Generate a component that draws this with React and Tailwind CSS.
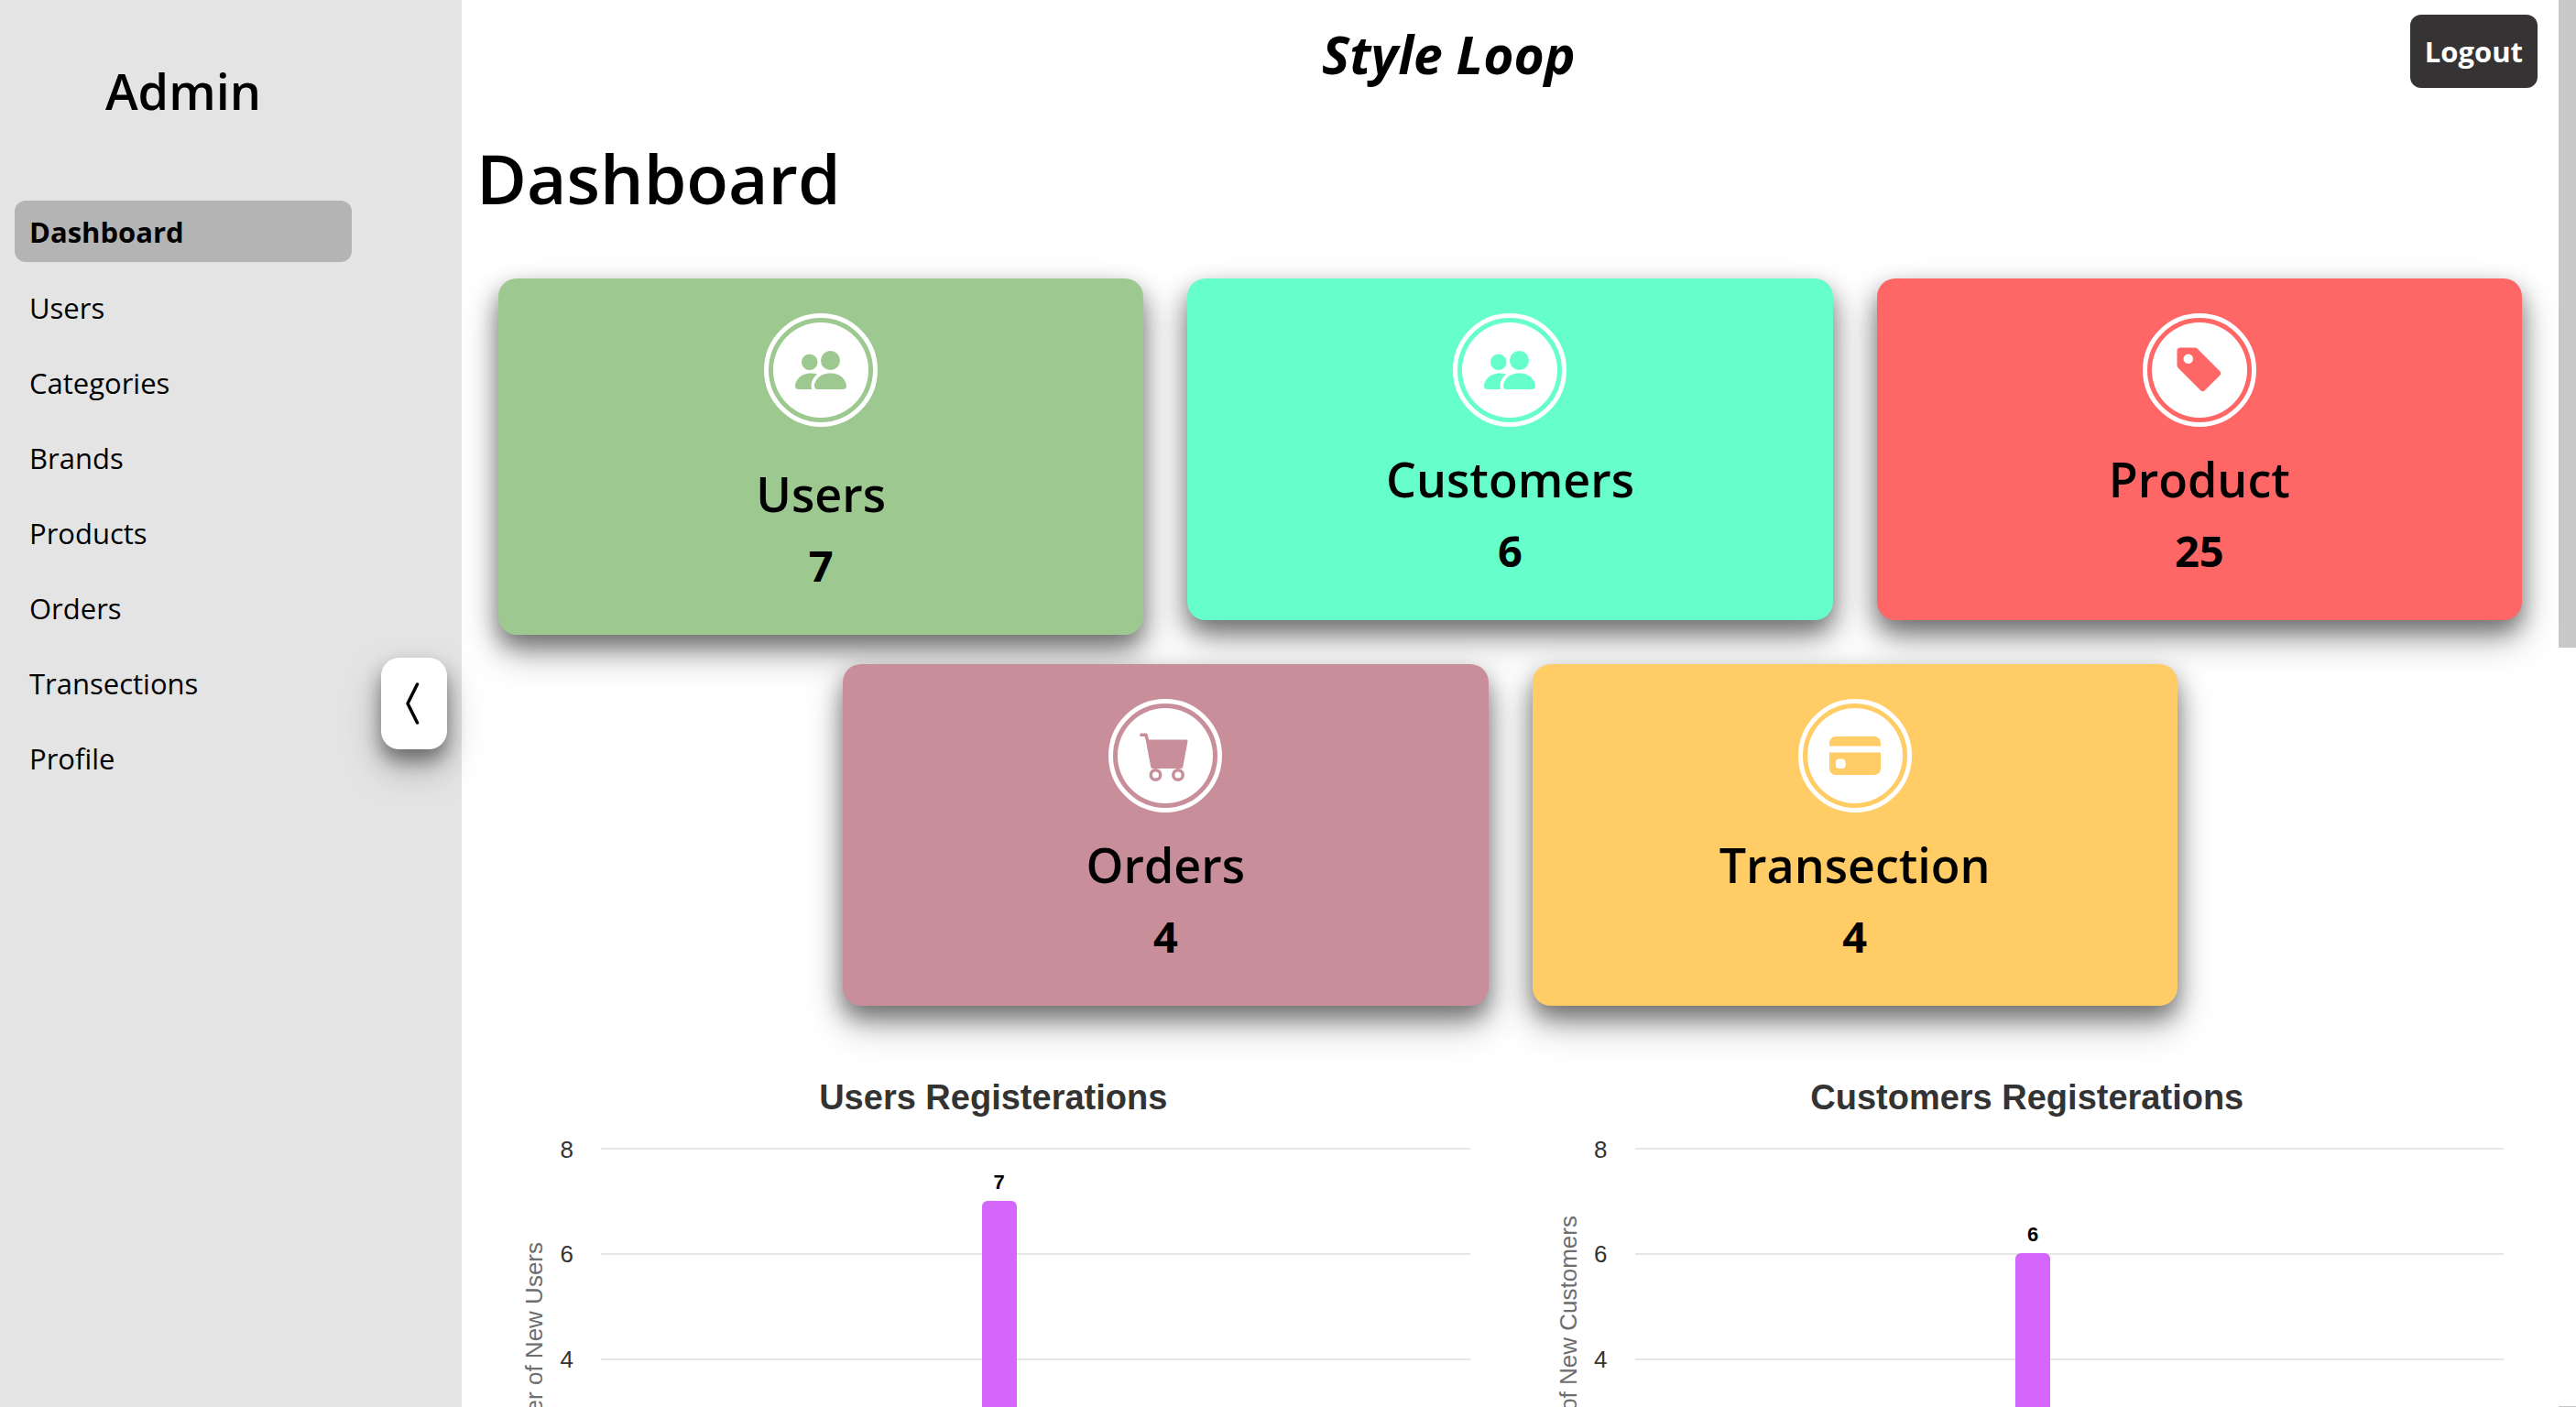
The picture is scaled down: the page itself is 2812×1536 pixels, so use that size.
import { BsPeopleFill, BsTagFill, BsCartFill, BsCreditCardFill, BsChevronCompactLeft } from "react-icons/bs";

const navItems = ["Dashboard", "Users", "Categories", "Brands", "Products", "Orders", "Transections", "Profile"];

const stats = [
  { label: "Users", value: 7, Icon: BsPeopleFill, bg: "bg-[#9dc991]", text: "text-[#9dc991]", gap: "mt-9" },
  { label: "Customers", value: 6, Icon: BsPeopleFill, bg: "bg-[#66ffcc]", text: "text-[#66ffcc]", gap: "mt-5" },
  { label: "Product", value: 25, Icon: BsTagFill, bg: "bg-[#ff6666]", text: "text-[#ff6666]", gap: "mt-5" },
  { label: "Orders", value: 4, Icon: BsCartFill, bg: "bg-[#c88f9b]", text: "text-[#c88f9b]", gap: "mt-5" },
  { label: "Transection", value: 4, Icon: BsCreditCardFill, bg: "bg-[#ffcc66]", text: "text-[#ffcc66]", gap: "mt-5" },
];

const ticks = [8, 6, 4, 2, 0];

const charts = [
  { title: "Users Registerations", axis: "Number of New Users", months: [0, 0, 0, 0, 0, 7, 0, 0, 0, 0, 0, 0] },
  { title: "Customers Registerations", axis: "Number of New Customers", months: [0, 0, 0, 0, 0, 6, 0, 0, 0, 0, 0, 0] },
];

function Sidebar() {
  return (
    <aside className="flex w-[504px] shrink-0 items-center justify-between bg-[#e4e4e4] px-4">
      <div className="w-[368px] self-start pt-[55px]">
        <p className="text-center text-[54px] leading-[88px] font-semibold">Admin</p>
        <nav className="mt-[76px] flex flex-col gap-[15px]">
          {navItems.map((item, i) => (
            <a
              key={item}
              href="#"
              className={
                i === 0
                  ? "rounded-xl bg-[#b4b4b4] px-4 pt-0.5 text-[31px] leading-[65px] font-bold"
                  : "rounded-xl px-4 pt-[3px] text-[31px] leading-[64px]"
              }
            >
              {item}
            </a>
          ))}
        </nav>
      </div>
      <button
        type="button"
        aria-label="Collapse sidebar"
        className="rounded-[20px] bg-white px-2 py-[22px] shadow-[0_20px_40px_rgba(0,0,0,0.25),0_12px_20px_rgba(0,0,0,0.4)]"
      >
        <BsChevronCompactLeft className="size-14" />
      </button>
    </aside>
  );
}

function StatCard({ label, value, Icon, bg, text, gap }) {
  return (
    <section
      className={`flex w-[calc((100%-96px)/3)] flex-col items-center rounded-[20px] pt-[38px] pb-10 shadow-[0_20px_40px_rgba(0,0,0,0.3),0_12px_24px_rgba(0,0,0,0.4)] ${bg}`}
    >
      <div className="rounded-full border-[5px] border-white p-[5px]">
        <div className="rounded-full bg-white p-6">
          <Icon className={`size-14 ${text}`} />
        </div>
      </div>
      <h2 className={`text-[52px] leading-[74px] font-semibold ${gap}`}>{label}</h2>
      <p className="mt-1.5 text-[47px] leading-[71px] font-bold">{value}</p>
    </section>
  );
}

function BarChart({ title, axis, months }) {
  return (
    <figure className="min-w-0 flex-1 pr-11 font-['Liberation_Sans',sans-serif]">
      <figcaption className="pl-11 text-center text-[38px] leading-[44px] font-bold text-[#333333]">{title}</figcaption>
      <div className="mt-[33px] flex h-[461px]">
        <div className="flex w-[75px] items-center justify-end">
          <span className="rotate-180 text-[26px] leading-6 whitespace-nowrap text-[#6e6e6e] [writing-mode:vertical-rl]">
            {axis}
          </span>
        </div>
        <div className="flex w-[61px] flex-col justify-between pt-0.5 pr-[30px] text-right text-[26px] text-[#333333]">
          {ticks.map((t) => (
            <span key={t} className="flex h-0 items-center justify-end">
              {t}
            </span>
          ))}
        </div>
        <div className="relative flex-1">
          <div className="absolute inset-0 flex flex-col justify-between">
            {ticks.map((t) => (
              <div key={t} className="h-0.5 bg-[#e6e6e6]" />
            ))}
          </div>
          <div className="relative grid h-full grid-cols-12 items-end">
            {months.map((v, i) => (
              <div key={i} className="flex h-full flex-col items-center justify-end">
                {v > 0 && (
                  <>
                    <span className="mb-1.5 text-[22px] leading-7 font-bold">{v}</span>
                    <div className="w-[38px] rounded-t-md bg-[#d466fc]" style={{ height: `${(v / 8) * 100}%` }} />
                  </>
                )}
              </div>
            ))}
          </div>
        </div>
      </div>
    </figure>
  );
}

export default function App() {
  return (
    <div className="flex h-screen overflow-hidden bg-white font-['Open_Sans','Noto_Sans',sans-serif] text-black">
      <Sidebar />
      <main className="min-w-0 flex-1 overflow-x-hidden overflow-y-auto px-4 pt-4 [scrollbar-width:none]">
        <header className="flex items-start justify-between pr-[7px] pl-3">
          <div />
          <p className="text-[57px] leading-[86px] font-bold italic">Style Loop</p>
          <button type="button" className="h-20 rounded-xl bg-[#353334] px-4 text-[31px] font-bold text-white">
            Logout
          </button>
        </header>
        <h1 className="mt-9 text-[75px] leading-[112px] font-semibold">Dashboard</h1>
        <div className="mt-[54px] flex flex-wrap items-start justify-center gap-x-12 gap-y-8 px-6">
          {stats.map((s) => (
            <StatCard key={s.label} {...s} />
          ))}
        </div>
        <div className="mt-[78px] flex">
          {charts.map((c) => (
            <BarChart key={c.title} {...c} />
          ))}
        </div>
      </main>
      <div className="flex w-[19px] shrink-0 flex-col justify-between" aria-hidden="true">
        <div className="h-[46%] bg-[#c8c8c8]" />
        <div className="h-px bg-[#c8c8c8]" />
      </div>
    </div>
  );
}
